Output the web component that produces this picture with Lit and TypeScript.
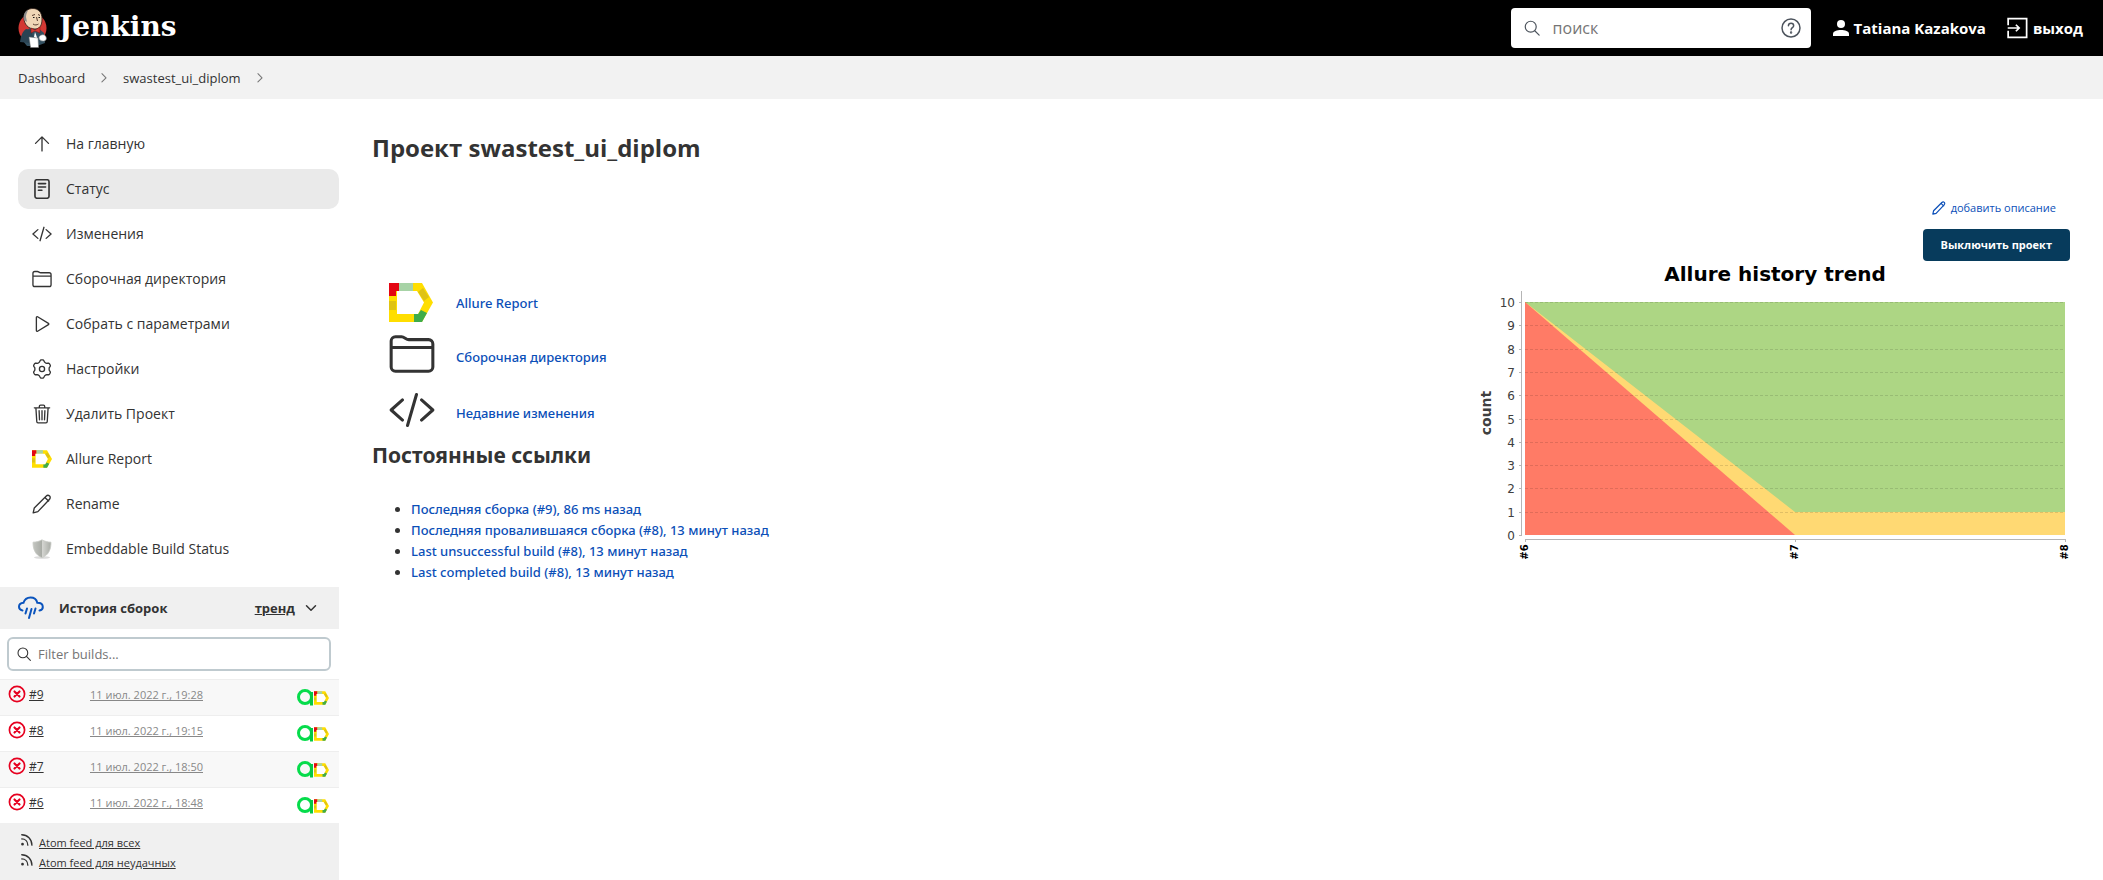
import { LitElement, html, svg, css, TemplateResult, SVGTemplateResult } from "lit";
import { customElement } from "lit/decorators.js";
import { classMap } from "lit/directives/class-map.js";

/* Outline icons share a 512-unit grid and take the current text colour. */
const outline = (body: SVGTemplateResult, size = 20, weight = 34): TemplateResult => html`
  <svg class="icon" width=${size} height=${size} viewBox="0 0 512 512" fill="none" stroke="currentColor"
    stroke-width=${weight} stroke-linecap="round" stroke-linejoin="round" aria-hidden="true">${body}</svg>`;

/* Six-lobed cog outline, traced around its centre. */
const cogPath = (() => {
  const points: string[] = [];
  for (let deg = 0; deg < 360; deg += 5) {
    const a = (deg * Math.PI) / 180;
    const r = 208 + 26 * Math.tanh(2 * Math.cos(6 * a));
    points.push(`${(256 + r * Math.sin(a)).toFixed(1)} ${(256 - r * Math.cos(a)).toFixed(1)}`);
  }
  return `M${points.join("L")}Z`;
})();

const shapes = {
  up: svg`<path d="M90 240L256 74l166 166M256 84v350"/>`,
  doc: svg`<rect x="76" y="20" width="360" height="472" rx="48" stroke-width="42"/><path d="M164 118h184M164 204h184M164 290h90" stroke-width="40"/>`,
  code: svg`<path d="M150 368L24 256l126-112M362 368l126-112-126-112M306 84l-100 344"/>`,
  folder: svg`<path d="M440 448H72a48 48 0 01-48-48V112a48 48 0 0148-48h68c30 0 50 32 80 32h220a48 48 0 0148 48v256a48 48 0 01-48 48zM24 184h464"/>`,
  play: svg`<path d="M112 90v332c0 17 17 28 31 20l278-169c12-7 12-27 0-34L143 70c-14-8-31 3-31 20z"/>`,
  cog: svg`<path d=${cogPath}/><circle cx="256" cy="256" r="66"/>`,
  trash: svg`<path d="M100 102l22 348c1 18 14 32 32 32h204c18 0 31-14 32-32l22-348M60 98h392M188 98V58a30 30 0 0130-30h76a30 30 0 0130 30v40M256 172v232M182 172l10 232M330 172l-10 232"/>`,
  pencil: svg`<path d="M30 482l28-124L360 56c28-28 66-28 90-6s20 62-6 90L150 452zM330 88l94 92"/>`,
  search: svg`<circle cx="220" cy="220" r="156"/><path d="M334 334l126 126"/>`,
  down: svg`<path d="M112 184l144 144 144-144" stroke-width="48"/>`,
  right: svg`<path d="M180 100l150 150-150 150"/>`,
  help: svg`<circle cx="256" cy="256" r="230"/><path d="M190 196c2-80 134-80 134 0 0 50-66 54-66 106"/><circle cx="258" cy="372" r="12"/>`,
  failed: svg`<circle cx="256" cy="256" r="216"/><path d="M328 328L184 184M328 184L184 328" stroke-width="60"/>`,
  feed: svg`<circle cx="92" cy="410" r="26" fill="currentColor"/><path d="M64 216c130 0 222 96 222 230M64 64c210 0 372 168 372 382"/>`,
  exit: svg`<path d="M50 190V40h430v432H50V322M40 256h250M230 180l76 76-76 76" stroke-linecap="butt" stroke-linejoin="miter"/>`,
};

const allure = (width: number, height: number): TemplateResult => html`
  <svg class="icon" width=${width} height=${height} viewBox="0 0 44 39" aria-hidden="true">
    <path fill="#ffde00" d="M0 0h33l11 19.500-11 19.500H0z"/>
    <path fill="#e30613" d="M0 0h10v8H7v5H0z"/>
    <path fill="#a7d3a6" d="M10 0h14v8H10z"/>
    <path fill="#dfc314" d="M0 18h7v9H0zM29 9l5-4 6 9-5 4z"/>
    <path fill="#3fac49" d="M25 31h4l3-4 6 3-5 9h-8z"/>
    <path fill="#fff" d="M8 8h20l7 11.500L29 31H8z"/>
  </svg>`;

const shield = html`
  <svg class="icon" width="20" height="20" viewBox="0 0 20 20" aria-hidden="true">
    <defs><linearGradient id="steel"><stop offset="0" stop-color="#c4c6c1"/><stop offset=".48" stop-color="#a9aca6"/>
      <stop offset=".52" stop-color="#d4d5d1"/><stop offset="1" stop-color="#a8aba5"/></linearGradient></defs>
    <ellipse cx="10" cy="18.500" rx="8" ry="1.300" fill="#dcdcdc"/>
    <path d="M10 .8c3 1.800 6 2.200 9 2.400 0 7-2 12.500-9 15.600C3 15.700 1 10.200 1 3.200c3-.2 6-.6 9-2.400z" fill="url(#steel)" stroke="#c9cbc7" stroke-width=".8"/>
  </svg>`;

const butler = html`
  <svg class="icon" width="30" height="40" viewBox="0 0 30 40" aria-hidden="true">
    <ellipse cx="14.500" cy="20" rx="14" ry="14.500" fill="#d33833"/>
    <path d="M5 33l2-9 5-4h8l6 5 1 10-8 3H9z" fill="#335061"/>
    <path d="M2 34c1-6 2-10 6-13l5 1 3 10-4 3z" fill="#2a4353"/>
    <path d="M6 10C6 3 10 .5 15 .5S24 4 24 11c0 6-2 10-7 10C10 21 6 16 6 10z" fill="#f0d6b7" stroke="#2b1d18" stroke-width=".8"/>
    <path d="M6 12c-1-4 0-8 4-10-1 3-2 4-2 7l1 5z" fill="#8b8b8b"/>
    <path d="M14 7.500l3-1M20 6.500l2 1M15 16c2 1.500 4 1 5.500 0M18.500 9l1 4" fill="none" stroke="#4a2c20" stroke-width=".9"/>
    <path d="M15 9.500h1.500M20.500 9.500H22" stroke="#111" stroke-width="1.200"/>
    <path d="M13 20l4 2 5-3v6l-5-2-4 2z" fill="#d33833" stroke="#81110e" stroke-width=".5"/>
    <path d="M17 24l3 8-4-3z" fill="#fff"/>
    <path d="M11 29l9 1 .6 9.500h-8z" fill="#fff" stroke="#777" stroke-width=".5"/>
    <path d="M21 29c2-3 6-3 7 0s-1 4-3 4-4-1-4-4z" fill="#fff" stroke="#999" stroke-width=".6"/>
  </svg>`;

const person = html`
  <svg class="icon" width="16" height="16" viewBox="0 0 16 16" fill="#fff" aria-hidden="true">
    <circle cx="8" cy="4" r="4"/><path d="M0 16v-2c0-3 4-4 8-4s8 1 8 4v2z"/>
  </svg>`;

const rainCloud = html`
  <svg class="icon" width="26" height="24" viewBox="0 0 26 24" fill="none" stroke="#0b54bd" stroke-width="2" stroke-linecap="round" aria-hidden="true">
    <path d="M4.500 14.500C2 14 1 12.500 1 10.800 1 8.500 3 7 5.500 6.800 6.500 3.500 9 1.500 12.500 1.500c3.500 0 6 2 6.800 5.200 3.200 0 5.500 1.500 5.500 4.200 0 2-1.200 3.300-3.300 3.700"/>
    <path d="M9 12.500l-1.500 5M13.500 13l-2.500 9M17.500 12.500l-1.500 5"/>
  </svg>`;

const testOps = html`
  <svg class="icon" width="17" height="17" viewBox="0 0 17 17" fill="none" stroke-width="3" aria-hidden="true">
    <circle cx="8" cy="8" r="6.500" stroke="#06dc4b"/><path d="M14.500 3V16.500" stroke="#05c846"/>
  </svg>`;

const menu: { label: string; icon: TemplateResult; current?: boolean }[] = [
  { label: "На главную", icon: outline(shapes.up) },
  { label: "Статус", icon: outline(shapes.doc), current: true },
  { label: "Изменения", icon: outline(shapes.code) },
  { label: "Сборочная директория", icon: outline(shapes.folder) },
  { label: "Собрать с параметрами", icon: outline(shapes.play) },
  { label: "Настройки", icon: outline(shapes.cog) },
  { label: "Удалить Проект", icon: outline(shapes.trash) },
  { label: "Allure Report", icon: allure(20, 18) },
  { label: "Rename", icon: outline(shapes.pencil) },
  { label: "Embeddable Build Status", icon: shield },
];

const builds = [
  { id: "#9", date: "11 июл. 2022 г., 19:28" },
  { id: "#8", date: "11 июл. 2022 г., 19:15" },
  { id: "#7", date: "11 июл. 2022 г., 18:50" },
  { id: "#6", date: "11 июл. 2022 г., 18:48" },
];

const permalinks = [
  "Последняя сборка (#9), 86 ms назад",
  "Последняя провалившаяся сборка (#8), 13 минут назад",
  "Last unsuccessful build (#8), 13 минут назад",
  "Last completed build (#8), 13 минут назад",
];

const base = css`
  :host { display: block; }
  * { box-sizing: border-box; }
  a { color: inherit; text-decoration: none; }
  ul { list-style: none; margin: 0; padding: 0; }
  .icon { display: block; flex: none; }
`;

@customElement("page-header")
class PageHeader extends LitElement {
  static styles = [base, css`
    .bar { display: flex; align-items: center; height: 56px; padding: 0 20px 0 18px; background: #000; color: #fff; }
    .brand { display: flex; align-items: center; gap: 11px; margin-right: auto; font: bold 28px/40px "DejaVu Serif", serif; }
    .name { padding-bottom: 3px; }
    .search { display: flex; align-items: center; gap: 12px; width: 300px; height: 40px; padding: 0 10px 0 12px; border-radius: 4px; background: #fff; color: #4d545d; }
    .box { flex: 1; min-width: 0; padding: 0; border: 0; outline: 0; background: none; font: 16px/24px "Open Sans", sans-serif; color: #333; }
    .box::placeholder { color: #757575; opacity: 1; }
    .link { display: flex; align-items: center; gap: 5px; font-size: 15px; font-weight: 700; margin-left: 20px; }
    .user { margin-left: 22px; }
  `];
  render() {
    return html`
      <header class="bar">
        <a class="brand" href="#">${butler}<span class="name">Jenkins</span></a>
        <label class="search">${outline(shapes.search, 18)}
          <input class="box" type="search" placeholder="поиск" aria-label="поиск">
          ${outline(shapes.help, 20, 38)}
        </label>
        <a class="link user" href="#">${person}Tatiana Kazakova</a>
        <a class="link" href="#">${outline(shapes.exit, 22, 40)}выход</a>
      </header>`;
  }
}

@customElement("side-menu")
class SideMenu extends LitElement {
  static styles = [base, css`
    .list { display: flex; flex-direction: column; gap: 5px; padding: 25px 0 18px 18px; }
    .item { display: flex; align-items: center; gap: 14px; height: 40px; padding: 0 14px; border-radius: 10px; font-size: 14px; font-weight: 500; }
    .current { background: #eaeaea; }
  `];
  render() {
    return html`<nav><ul class="list">${menu.map((m) => html`
      <li><a class=${classMap({ item: true, current: !!m.current })} href="#">${m.icon}${m.label}</a></li>`)}</ul></nav>`;
  }
}

@customElement("build-history")
class BuildHistory extends LitElement {
  static styles = [base, css`
    .head { display: flex; align-items: center; height: 42px; padding: 0 20px 0 18px; background: #f0f0f0; font-weight: 700; }
    .title { margin: 0 auto 0 15px; font-size: 13px; }
    .trend { text-decoration: underline; margin-right: 8px; }
    .filter { display: flex; align-items: center; gap: 6px; height: 34px; margin: 8px 8px 8px 7px; padding: 0 7px; border: 2px solid #bfcacf; border-radius: 6px; }
    .box { flex: 1; min-width: 0; padding: 0; border: 0; outline: 0; background: none; font: 13px/20px "Open Sans", sans-serif; }
    .box::placeholder { color: #757575; opacity: 1; }
    .builds { width: 100%; border-collapse: separate; border-spacing: 0; table-layout: fixed; font-size: 11px; }
    .row:nth-child(odd) { background: #f8f8f8; }
    .cell { height: 36px; padding: 0; border-top: 1px solid #eee; vertical-align: middle; }
    .number { width: 90px; }
    .tools { width: 50px; }
    .build { display: flex; align-items: flex-start; gap: 3px; padding: 0 0 5px 8px; font-size: 12px; }
    .failed { color: #e6001f; }
    .text { text-decoration: underline; }
    .date { display: block; padding-bottom: 5px; color: #888; text-decoration: underline; }
    .marks { display: flex; align-items: center; padding-left: 8px; }
    .feeds { padding: 10px 0 7px 20px; background: #f0f0f0; font-size: 11px; line-height: 20px; }
    .feed { display: flex; align-items: flex-start; gap: 5px; }
  `];
  render() {
    return html`
      <section>
        <div class="head">${rainCloud}<h2 class="title">История сборок</h2>
          <a class="trend" href="#">тренд</a>${outline(shapes.down, 16)}</div>
        <label class="filter">${outline(shapes.search, 16)}
          <input class="box" type="search" placeholder="Filter builds..." aria-label="Filter builds"></label>
        <table class="builds"><tbody>${builds.map((b) => html`
          <tr class="row">
            <td class="cell number"><a class="build" href="#"><span class="failed">${outline(shapes.failed, 18, 48)}</span><span class="text">${b.id}</span></a></td>
            <td class="cell"><a class="date" href="#">${b.date}</a></td>
            <td class="cell tools"><a class="marks" href="#" aria-label="Allure">${testOps}${allure(15, 14)}</a></td>
          </tr>`)}</tbody></table>
        <ul class="feeds">${["Atom feed для всех", "Atom feed для неудачных"].map((t) => html`
          <li><a class="feed" href="#">${outline(shapes.feed, 14, 48)}<span class="text">${t}</span></a></li>`)}</ul>
      </section>`;
  }
}

@customElement("history-trend")
class HistoryTrend extends LitElement {
  static styles = [base, css`
    .chart { display: block; max-width: 100%; font-family: "DejaVu Sans", sans-serif; }
    .heading { font-size: 20px; font-weight: 700; }
    .tick { font-size: 12px; fill: #404040; }
    .axis { font-size: 14px; font-weight: 700; fill: #404040; }
    .build { font-size: 10px; font-weight: 700; }
  `];
  render() {
    const left = 55, right = 595, top = 41, bottom = 274;
    const mid = (left + right) / 2;
    const y = (v: number) => Math.round(bottom - (v * (bottom - top)) / 10);
    const ticks = Array.from({ length: 11 }, (_, i) => i);
    return html`
      <svg class="chart" width="600" height="300" viewBox="0 0 600 300" role="img" aria-label="Allure history trend">
        <text class="heading" x="305" y="20" text-anchor="middle">Allure history trend</text>
        <rect x=${left} y=${top} width=${right - left} height=${bottom - top} fill="#add684"/>
        <path fill="#ffd973" d="M${left} ${top}L${mid} ${y(1)}H${right}V${bottom}H${left}z"/>
        <path fill="#ff7b66" d="M${left} ${top}L${mid} ${bottom}H${left}z"/>
        <path d="M51.500 30V274M${left} 278.500H${right}" stroke="#b5b5b5" fill="none"/>
        ${[left, mid, right].map((x, i) => svg`
          <path d="M${x + 0.5} 278v3" stroke="#b5b5b5"/>
          <text class="build" text-anchor="middle" transform="translate(${x + 3} 291) rotate(-90)">#${i + 6}</text>`)}
        ${ticks.map((v) => svg`
          <path d="M49 ${y(v) + 0.5}h3" stroke="#b5b5b5"/>
          ${v ? svg`<path d="M${left} ${y(v) + 0.5}H${right}" stroke="#000" stroke-opacity=".12" stroke-dasharray="3 2"/>` : ""}
          <text class="tick" x="45" y=${y(v) + 5} text-anchor="end">${v}</text>`)}
        <text class="axis" text-anchor="middle" transform="translate(21 152) rotate(-90)">count</text>
      </svg>`;
  }
}

@customElement("project-page")
class ProjectPage extends LitElement {
  static styles = [base, css`
    .main { padding: 32px 33px 24px; }
    .title { margin: 0 0 31px; font-size: 24px; line-height: 34px; font-weight: 700; }
    .columns { display: flex; align-items: flex-start; justify-content: space-between; gap: 24px; }
    .content { padding-top: 80px; color: #0b4fb8; font-family: "Noto Sans", sans-serif; font-weight: 500; }
    .links { border-collapse: collapse; }
    .cell { height: 56px; padding: 0 0 0 17px; }
    .first { height: 53px; }
    .label { padding-left: 21px; }
    .glyph { display: block; color: #333; padding-bottom: 6px; }
    .sub { margin: 0 0 30px; font-size: 21px; line-height: 28px; color: #333; font-weight: 700; }
    .permalinks { list-style: disc; padding-left: 39px; line-height: 21px; }
    .permalinks li::marker { color: #333; }
    .side { display: flex; flex-direction: column; align-items: flex-end; }
    .describe { display: flex; align-items: center; gap: 5px; padding-right: 14px; margin-bottom: 9px; font-size: 11px; line-height: 24px; color: #0b4fb8; }
    .disable { height: 32px; padding: 0 18px; border: 0; border-radius: 4px; background: #073b5c; color: #fff; font: 700 11px/20px "Open Sans", sans-serif; }
  `];
  render() {
    return html`
      <main class="main">
        <h1 class="title">Проект swastest_ui_diplom</h1>
        <div class="columns">
          <div class="content">
            <table class="links"><tbody>
              <tr><td class="cell first">${allure(44, 39)}</td><td class="cell first label"><a href="#">Allure Report</a></td></tr>
              <tr><td class="cell"><span class="glyph">${outline(shapes.folder, 46)}</span></td><td class="cell label"><a href="#">Сборочная директория</a></td></tr>
              <tr><td class="cell"><span class="glyph">${outline(shapes.code, 46)}</span></td><td class="cell label"><a href="#">Недавние изменения</a></td></tr>
            </tbody></table>
            <h2 class="sub">Постоянные ссылки</h2>
            <ul class="permalinks">${permalinks.map((p) => html`<li><a href="#">${p}</a></li>`)}</ul>
          </div>
          <div class="side">
            <a class="describe" href="#">${outline(shapes.pencil, 14, 44)}добавить описание</a>
            <button class="disable" type="button">Выключить проект</button>
            <history-trend></history-trend>
          </div>
        </div>
      </main>`;
  }
}

@customElement("app-root")
class AppRoot extends LitElement {
  static styles = [base, css`
    :host { min-height: 100vh; background: #fff; color: #333; font: 13px/20px "Open Sans", sans-serif; }
    .crumbs { display: flex; align-items: center; gap: 12px; height: 43px; padding: 0 18px; background: #f2f2f2; }
    .layout { display: grid; grid-template-columns: 339px minmax(0, 1fr); }
    .arrow { color: #777; }
  `];
  render() {
    const arrow = html`<span class="arrow">${outline(shapes.right, 14, 40)}</span>`;
    return html`
      <page-header></page-header>
      <nav class="crumbs"><a href="#">Dashboard</a>${arrow}<a href="#">swastest_ui_diplom</a>${arrow}</nav>
      <div class="layout">
        <aside><side-menu></side-menu><build-history></build-history></aside>
        <project-page></project-page>
      </div>`;
  }
}
